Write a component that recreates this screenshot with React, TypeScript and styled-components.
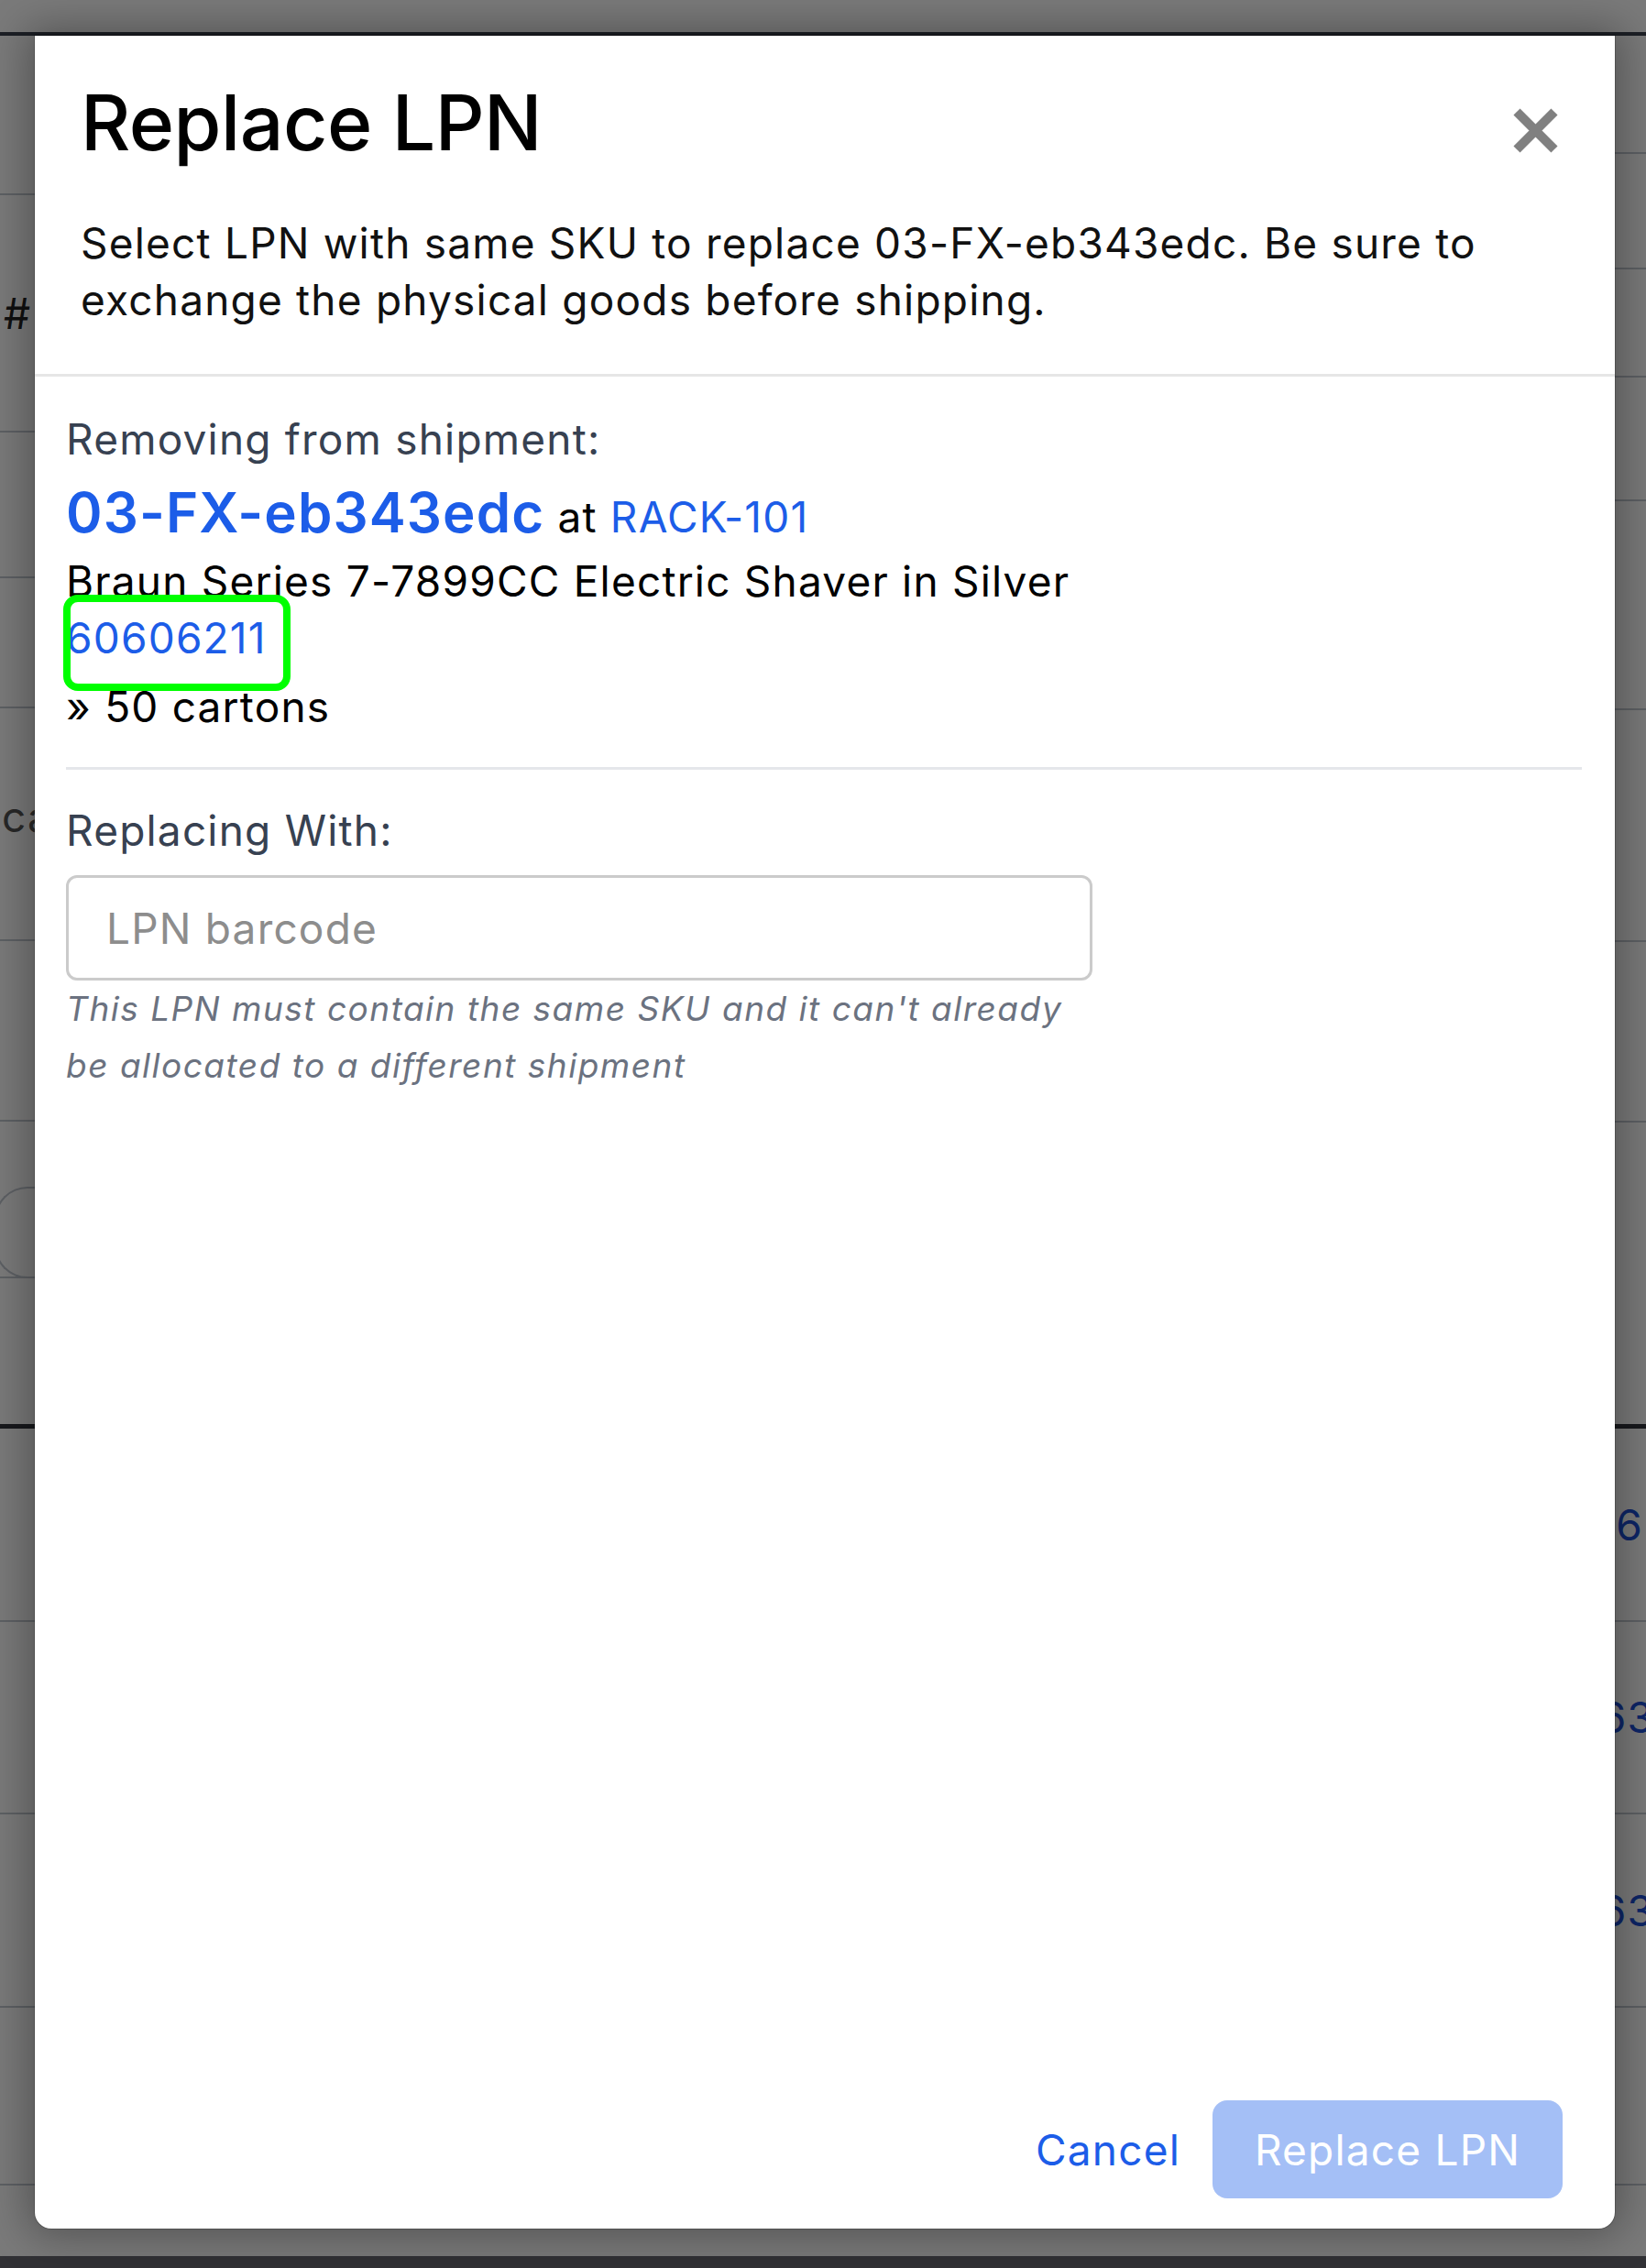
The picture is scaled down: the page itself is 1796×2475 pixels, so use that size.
import styled, { createGlobalStyle } from 'styled-components'

const GlobalStyle = createGlobalStyle`
  html, body {
    margin: 0;
    padding: 0;
  }

  body {
    font-family: Inter, "Noto Sans", sans-serif;
    background: #fff;
  }

  * {
    box-sizing: border-box;
  }
`

// ---- page behind the dialog ----

const Page = styled.div`
  position: relative;
  width: 1796px;
  height: 2475px;
  overflow: hidden;
  background: #fff;
  display: flex;
  flex-direction: column;
`

const TopStrip = styled.div`
  height: 39px;
  flex-shrink: 0;
  border-bottom: 4px solid #3b424e;
`

const Rails = styled.div`
  flex: 1;
  display: flex;
  justify-content: space-between;
`

const Rail = styled.div<{ $width: number }>`
  width: ${(p) => p.$width}px;
  display: flex;
  flex-direction: column;
`

const RailRow = styled.div<{ $h: number; $dark?: boolean; $end?: boolean }>`
  height: ${(p) => p.$h}px;
  flex-shrink: 0;
  border-bottom: ${(p) => (p.$dark ? '5px solid #33363d' : '2px solid #c2c8d2')};
  display: flex;
  align-items: center;
  justify-content: ${(p) => (p.$end ? 'flex-end' : 'flex-start')};
  overflow: hidden;
  white-space: nowrap;
  font-size: 46px;
  letter-spacing: 1.2px;
  color: #222;
`

const RailText = styled.span<{ $color?: string; $shift?: number; $lift?: number }>`
  color: ${(p) => p.$color || '#222'};
  margin-left: ${(p) => p.$shift || 0}px;
  margin-right: ${(p) => -(p.$shift || 0)}px;
  margin-bottom: ${(p) => (p.$lift || 0) * 2}px;
`

const RailPill = styled.div`
  align-self: flex-end;
  width: 60px;
  height: 100px;
  margin-left: -6px;
  margin-bottom: -2px;
  border: 2px solid #c2c8d2;
  border-right: none;
  border-radius: 36px 0 0 36px;
`

const BottomBar = styled.div`
  height: 13px;
  margin-top: auto;
  flex-shrink: 0;
  background: #66686f;
`

// ---- dialog ----

const Overlay = styled.div`
  position: absolute;
  inset: 0;
  display: flex;
  padding: 39px 34px 43px 38px;
  background: rgba(0, 0, 0, 0.52);
`

const Modal = styled.div`
  flex: 1;
  display: flex;
  flex-direction: column;
  background: #fff;
  border-radius: 0 0 18px 18px;
  letter-spacing: 1.2px;
  box-shadow: 0 0 0 1px rgba(0, 0, 0, 0.18), 0 0 46px 8px rgba(0, 0, 0, 0.32);
`

const Header = styled.header`
  padding: 45px 62px 50px 50px;
  border-bottom: 3px solid #e6e6e6;
`

const TitleRow = styled.div`
  display: flex;
  justify-content: space-between;
  align-items: flex-start;
`

const Title = styled.h1`
  margin: 0;
  font-size: 84px;
  line-height: 100px;
  font-weight: 500;
  letter-spacing: -0.5px;
  color: #000;
`

const CloseButton = styled.button`
  margin-top: 34px;
  padding: 0;
  border: none;
  background: none;
  display: flex;
  cursor: pointer;
`

const Description = styled.p`
  margin: 50px 0 0;
  font-size: 46px;
  line-height: 62px;
  color: #111;
`

const Body = styled.section`
  flex: 1;
  padding: 37px 36px 0 34px;
`

const Label = styled.div`
  font-size: 46px;
  line-height: 62px;
  color: #374151;
`

const LpnLine = styled.div`
  margin-top: 10px;
  font-size: 46px;
  line-height: 78px;
  color: #000;
`

const Link = styled.a<{ $big?: boolean }>`
  color: #1c5de8;
  text-decoration: none;
  font-size: ${(p) => (p.$big ? '60px' : '46px')};
  font-weight: ${(p) => (p.$big ? 600 : 400)};
  letter-spacing: ${(p) => (p.$big ? '1.1px' : '1.2px')};
`

const TextLine = styled.div<{ $gap?: number }>`
  margin-top: ${(p) => p.$gap || 0}px;
  font-size: 46px;
  line-height: 62px;
  color: #000;
`

const Highlighted = styled.span`
  position: relative;

  &::after {
    content: '';
    position: absolute;
    top: -19px;
    bottom: -30px;
    left: -3px;
    right: -26px;
    border: 8px solid #00ff00;
    border-radius: 16px;
    pointer-events: none;
  }
`

const Divider = styled.hr`
  margin: 35px 0 0;
  border: none;
  height: 3px;
  background: #e5e7eb;
`

const FieldLabel = styled(Label)`
  margin-top: 35px;
`

const BarcodeInput = styled.input`
  display: block;
  margin-top: 18px;
  width: 1120px;
  height: 115px;
  padding: 0 41px;
  border: 3px solid #cbcbcb;
  border-radius: 12px;
  font-family: inherit;
  font-size: 46px;
  letter-spacing: 1.2px;
  color: #000;
  outline: none;

  &::placeholder {
    color: #8d8d8d;
  }
`

const Helper = styled.p`
  margin: 0;
  max-width: 1120px;
  font-size: 37px;
  line-height: 62px;
  letter-spacing: 1.5px;
  font-style: italic;
  color: #6b7280;
`

const Footer = styled.footer`
  display: flex;
  justify-content: flex-end;
  align-items: center;
  gap: 35px;
  padding: 0 57px 33px 0;
`

const CancelButton = styled.button`
  padding: 0;
  border: none;
  background: none;
  font-family: inherit;
  font-size: 46px;
  line-height: 62px;
  letter-spacing: inherit;
  color: #1c5de8;
  cursor: pointer;
`

const PrimaryButton = styled.button`
  width: 382px;
  height: 107px;
  border: none;
  border-radius: 16px;
  background: #a4bff6;
  font-family: inherit;
  font-size: 46px;
  letter-spacing: inherit;
  color: #fff;
`

const leftRows = [174, 259, 159, 142, 254, 197, 171, 164, 211, 210, 211, 194]
const rightRows = [129, 126, 118, 135, 228, 253, 197, 334, 211, 210, 211, 194]

function CloseIcon() {
  return (
    <svg width="49" height="49" viewBox="0 0 49 49">
      <path d="M4 4 L45 45 M45 4 L4 45" stroke="#808080" strokeWidth="10" fill="none" />
    </svg>
  )
}

export default function App() {
  return (
    <Page>
      <GlobalStyle />
      <TopStrip />
      <Rails>
        <Rail $width={38}>
          {leftRows.map((h, i) => (
            <RailRow key={i} $h={h} $dark={i === 7}>
              {i === 1 && <RailText $shift={4}>#</RailText>}
              {i === 4 && <RailText $color="#555" $shift={2} $lift={8}>ca</RailText>}
              {i === 6 && <RailPill />}
            </RailRow>
          ))}
        </Rail>
        <Rail $width={34}>
          {rightRows.map((h, i) => (
            <RailRow key={i} $h={h} $dark={i === 7} $end>
              {i === 8 && <RailText $color="#1d4fd6" $shift={-3}>0606</RailText>}
              {(i === 9 || i === 10) && <RailText $color="#1d4fd6" $shift={9}>063</RailText>}
            </RailRow>
          ))}
        </Rail>
      </Rails>
      <BottomBar />

      <Overlay>
        <Modal role="dialog" aria-labelledby="replace-lpn-title">
          <Header>
            <TitleRow>
              <Title id="replace-lpn-title">Replace LPN</Title>
              <CloseButton aria-label="Close">
                <CloseIcon />
              </CloseButton>
            </TitleRow>
            <Description>
              Select LPN with same SKU to replace 03-FX-eb343edc. Be sure to exchange the physical goods before shipping.
            </Description>
          </Header>

          <Body>
            <Label>Removing from shipment:</Label>
            <LpnLine>
              <Link $big href="#">03-FX-eb343edc</Link> at <Link href="#">RACK-101</Link>
            </LpnLine>
            <TextLine>Braun Series 7-7899CC Electric Shaver in Silver</TextLine>
            <TextLine>
              <Highlighted>
                <Link href="#">60606211</Link>
              </Highlighted>
            </TextLine>
            <TextLine $gap={13}>» 50 cartons</TextLine>
            <Divider />
            <FieldLabel>Replacing With:</FieldLabel>
            <BarcodeInput placeholder="LPN barcode" />
            <Helper>This LPN must contain the same SKU and it can't already be allocated to a different shipment</Helper>
          </Body>

          <Footer>
            <CancelButton>Cancel</CancelButton>
            <PrimaryButton disabled>Replace LPN</PrimaryButton>
          </Footer>
        </Modal>
      </Overlay>
    </Page>
  )
}
